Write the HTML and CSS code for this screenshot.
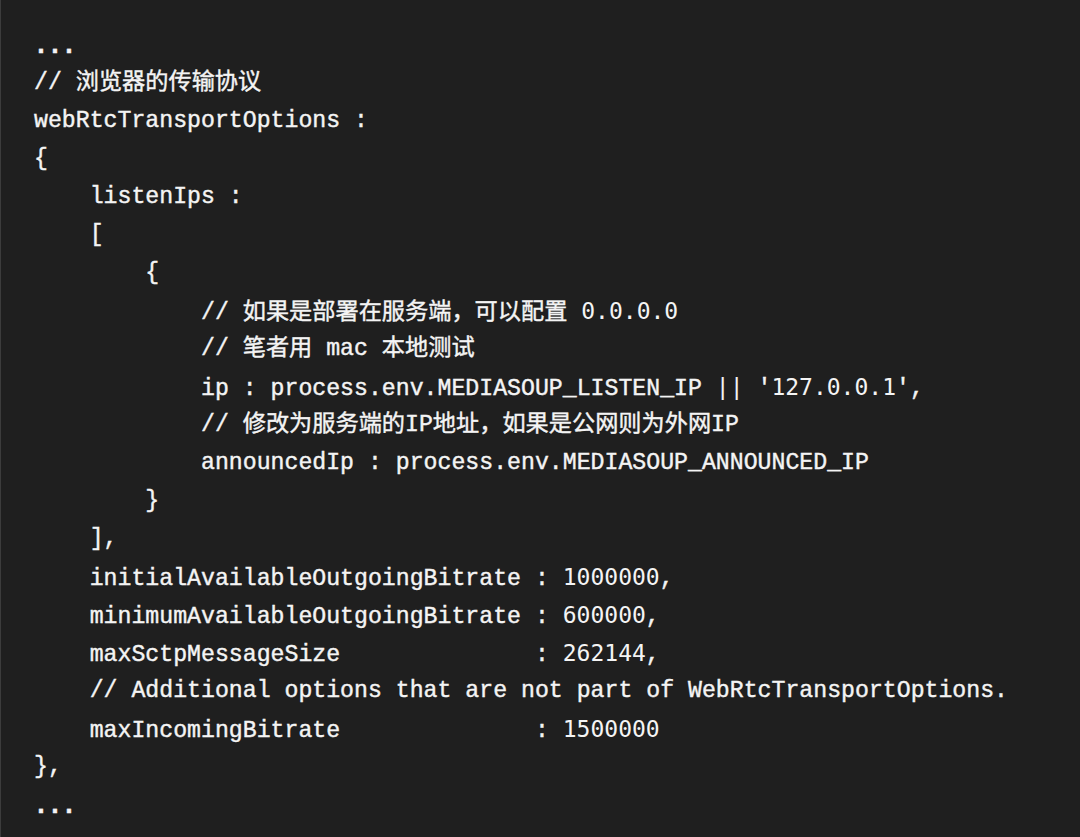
FILE: index.html
```html
<!DOCTYPE html>
<html lang="zh-CN">
<head>
<meta charset="utf-8">
<title>webRtcTransportOptions</title>
<link rel="stylesheet" href="styles.css">
</head>
<body>
<main class="code-block">
<div class="line"><span class="dots">...</span></div>
<div class="line">// 浏览器的传输协议</div>
<div class="line">webRtcTransportOptions :</div>
<div class="line">{</div>
<div class="line">    listenIps :</div>
<div class="line">    [</div>
<div class="line">        {</div>
<div class="line">            // 如果是部署在服务端，可以配置 <span class="num">0.0.0.0</span></div>
<div class="line">            // 笔者用 mac 本地测试</div>
<div class="line">            ip : process.env.MEDIASOUP_LISTEN_IP <span class="num">||</span> '<span class="num">127.0.0.1</span>',</div>
<div class="line">            // 修改为服务端的IP地址，如果是公网则为外网IP</div>
<div class="line">            announcedIp : process.env.MEDIASOUP_ANNOUNCED_IP</div>
<div class="line">        }</div>
<div class="line">    ],</div>
<div class="line">    initialAvailableOutgoingBitrate : <span class="num">1000000</span>,</div>
<div class="line">    minimumAvailableOutgoingBitrate : <span class="num">600000</span>,</div>
<div class="line">    maxSctpMessageSize              : <span class="num">262144</span>,</div>
<div class="line">    // Additional options that are not part of WebRtcTransportOptions.</div>
<div class="line">    maxIncomingBitrate              : <span class="num">1500000</span></div>
<div class="line">},</div>
<div class="line"><span class="dots">...</span></div>
</main>
</body>
</html>
```
FILE: styles.css
```css
html, body {
  margin: 0;
  padding: 0;
  background: #1f1f1f;
}

.code-block {
  box-sizing: border-box;
  width: 1080px;
  height: 837px;
  padding: 26px 0 0 33px;
  background: #1f1f1f;
  border-left: 1px solid #3c3c3c;
  color: #f4f4f4;
  font-family: "Liberation Mono", "Noto Sans CJK SC", monospace;
  font-size: 23.2px;
  font-weight: normal;
  -webkit-text-stroke: 0.4px #f4f4f4;
}

.line {
  white-space: pre;
  height: 38px;
  line-height: 38px;
}

.num {
  font-family: "DejaVu Sans Mono", monospace;
  font-size: 23px;
  -webkit-text-stroke: 0;
}

.dots {
  font-family: "DejaVu Sans Mono", monospace;
  font-weight: bold;
}
```
